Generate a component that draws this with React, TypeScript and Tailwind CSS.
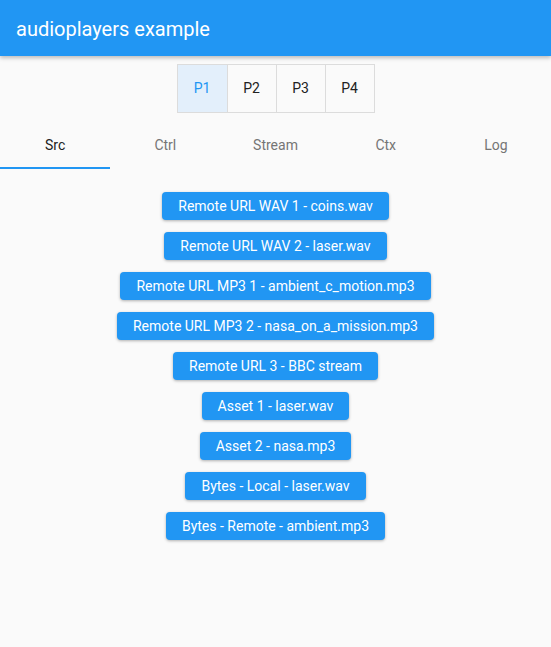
import { useState } from 'react';

const sources = [
  'Remote URL WAV 1 - coins.wav',
  'Remote URL WAV 2 - laser.wav',
  'Remote URL MP3 1 - ambient_c_motion.mp3',
  'Remote URL MP3 2 - nasa_on_a_mission.mp3',
  'Remote URL 3 - BBC stream',
  'Asset 1 - laser.wav',
  'Asset 2 - nasa.mp3',
  'Bytes - Local - laser.wav',
  'Bytes - Remote - ambient.mp3',
];

const players = ['P1', 'P2', 'P3', 'P4'];
const tabs = ['Src', 'Ctrl', 'Stream', 'Ctx', 'Log'];

export default function App() {
  const [player, setPlayer] = useState(0);
  const [tab, setTab] = useState(0);

  return (
    <div className="min-h-[647px] bg-[#fafafa] font-['Roboto',sans-serif]">
      {/* App bar */}
      <header className="relative z-10 flex h-14 items-center bg-[#2196f3] px-4 shadow-[0_2px_4px_rgba(0,0,0,0.25)]">
        <h1 className="pt-[2px] text-[20px] font-normal text-white">audioplayers example</h1>
      </header>

      {/* Player toggle */}
      <div className="flex justify-center pt-2">
        <div className="flex border border-[#dcdcdc]">
          {players.map((p, i) => (
            <button
              key={p}
              onClick={() => setPlayer(i)}
              className={`flex h-[47px] w-[49px] items-center justify-center text-[14px] ${
                i > 0 ? 'border-l border-[#dcdcdc]' : ''
              } ${i === player ? 'bg-[#e3effb] text-[#2196f3]' : 'text-[#212121]'}`}
            >
              {p}
            </button>
          ))}
        </div>
      </div>

      {/* Tabs */}
      <div className="mt-[8px] flex h-12">
        {tabs.map((t, i) => (
          <button
            key={t}
            onClick={() => setTab(i)}
            className={`relative flex flex-1 items-center justify-center text-[14px] ${
              i === tab ? 'text-[#212121]' : 'text-[#757575]'
            }`}
          >
            {t}
            {i === tab && <span className="absolute bottom-0 left-0 right-0 h-[2px] bg-[#2196f3]" />}
          </button>
        ))}
      </div>

      {/* Sources */}
      <div className="flex flex-col items-center gap-3 pt-[23px]">
        {sources.map((s) => (
          <button
            key={s}
            className="h-7 rounded bg-[#2196f3] px-4 text-[14px] font-normal text-white shadow-[0_1px_3px_rgba(0,0,0,0.3)]"
          >
            {s}
          </button>
        ))}
      </div>
    </div>
  );
}
